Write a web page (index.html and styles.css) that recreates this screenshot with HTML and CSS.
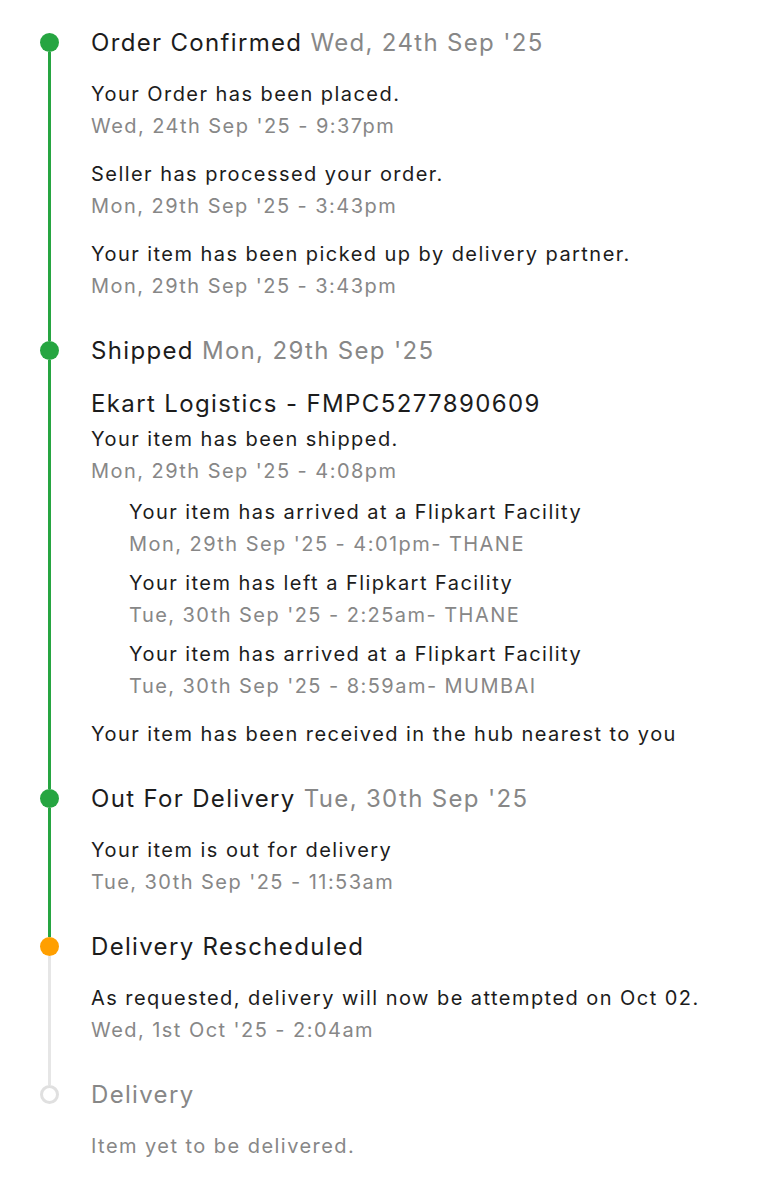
FILE: index.html
```html
<!DOCTYPE html>
<html lang="en">
<head>
<meta charset="utf-8">
<title>Order tracking</title>
<link rel="stylesheet" href="styles.css">
</head>
<body>
<div class="timeline">

  <div class="step">
    <div class="rail">
      <span class="seg-top none"></span>
      <span class="dot done"></span>
      <span class="seg green"></span>
    </div>
    <div class="content">
      <div class="heading">Order Confirmed <span class="hdate">Wed, 24th Sep '25</span></div>
      <div class="items">
        <div class="item"><div class="text">Your Order has been placed.</div><div class="date">Wed, 24th Sep '25 - 9:37pm</div></div>
        <div class="item"><div class="text">Seller has processed your order.</div><div class="date">Mon, 29th Sep '25 - 3:43pm</div></div>
        <div class="item"><div class="text">Your item has been picked up by delivery partner.</div><div class="date">Mon, 29th Sep '25 - 3:43pm</div></div>
      </div>
    </div>
  </div>

  <div class="step">
    <div class="rail">
      <span class="seg-top green"></span>
      <span class="dot done"></span>
      <span class="seg green"></span>
    </div>
    <div class="content">
      <div class="heading">Shipped <span class="hdate">Mon, 29th Sep '25</span></div>
      <div class="shipped">
        <div class="courier">Ekart Logistics - FMPC5277890609</div>
        <div class="item"><div class="text">Your item has been shipped.</div><div class="date">Mon, 29th Sep '25 - 4:08pm</div></div>
        <div class="sub-items">
          <div class="item"><div class="text">Your item has arrived at a Flipkart Facility</div><div class="date">Mon, 29th Sep '25 - 4:01pm- THANE</div></div>
          <div class="item"><div class="text">Your item has left a Flipkart Facility</div><div class="date">Tue, 30th Sep '25 - 2:25am- THANE</div></div>
          <div class="item"><div class="text">Your item has arrived at a Flipkart Facility</div><div class="date">Tue, 30th Sep '25 - 8:59am- MUMBAI</div></div>
        </div>
        <div class="text hub">Your item has been received in the hub nearest to you</div>
      </div>
    </div>
  </div>

  <div class="step">
    <div class="rail">
      <span class="seg-top green"></span>
      <span class="dot done"></span>
      <span class="seg green"></span>
    </div>
    <div class="content">
      <div class="heading">Out For Delivery <span class="hdate">Tue, 30th Sep '25</span></div>
      <div class="items">
        <div class="item"><div class="text">Your item is out for delivery</div><div class="date">Tue, 30th Sep '25 - 11:53am</div></div>
      </div>
    </div>
  </div>

  <div class="step">
    <div class="rail">
      <span class="seg-top green"></span>
      <span class="dot warn"></span>
      <span class="seg grey"></span>
    </div>
    <div class="content">
      <div class="heading">Delivery Rescheduled</div>
      <div class="items">
        <div class="item"><div class="text">As requested, delivery will now be attempted on Oct 02.</div><div class="date">Wed, 1st Oct '25 - 2:04am</div></div>
      </div>
    </div>
  </div>

  <div class="step last">
    <div class="rail">
      <span class="seg-top grey"></span>
      <span class="dot pending"></span>
      <span class="seg none"></span>
    </div>
    <div class="content">
      <div class="heading muted">Delivery</div>
      <div class="items">
        <div class="text muted">Item yet to be delivered.</div>
      </div>
    </div>
  </div>

</div>
</body>
</html>
```
FILE: styles.css
```css
html, body {
  margin: 0;
  padding: 0;
  background: #ffffff;
}

body {
  font-family: Inter, "Noto Sans", "Liberation Sans", sans-serif;
  color: #1c1c1c;
}

.timeline {
  padding: 27px 10px 0 40px;
  display: flex;
  flex-direction: column;
}

.step {
  display: flex;
  gap: 32px;
}

.rail {
  width: 19px;
  flex: none;
  display: flex;
  flex-direction: column;
  align-items: center;
}

.seg-top {
  width: 3px;
  height: 6px;
  flex: none;
}

.seg {
  width: 3px;
  flex: 1;
}

.green { background: #26a541; }
.grey { background: #e6e6e6; }
.none { background: transparent; }

.dot {
  width: 19px;
  height: 19px;
  border-radius: 50%;
  flex: none;
  box-sizing: border-box;
}

.dot.done { background: #26a541; }
.dot.warn { background: #ff9f00; }
.dot.pending {
  background: #ffffff;
  border: 3px solid #e0e0e0;
}

.content {
  flex: 1;
  padding-bottom: 33px;
}

.heading {
  font-size: 24px;
  line-height: 32px;
  letter-spacing: 1.33px;
}

.hdate {
  color: #878787;
}

.items {
  display: flex;
  flex-direction: column;
  gap: 16px;
  padding-top: 19px;
}

.text {
  font-size: 20px;
  line-height: 32px;
  letter-spacing: 1.45px;
}

.date {
  font-size: 20px;
  line-height: 32px;
  letter-spacing: 1.45px;
  color: #878787;
}

.muted {
  color: #878787;
}

.shipped {
  padding-top: 21px;
  display: flex;
  flex-direction: column;
}

.courier {
  font-size: 24px;
  line-height: 32px;
  letter-spacing: 1.37px;
  margin-bottom: 3px;
}

.sub-items {
  display: flex;
  flex-direction: column;
  gap: 7px;
  padding: 9px 0 0 38px;
}

.hub {
  margin-top: 16px;
}

.step.last .content {
  padding-bottom: 40px;
}
```
